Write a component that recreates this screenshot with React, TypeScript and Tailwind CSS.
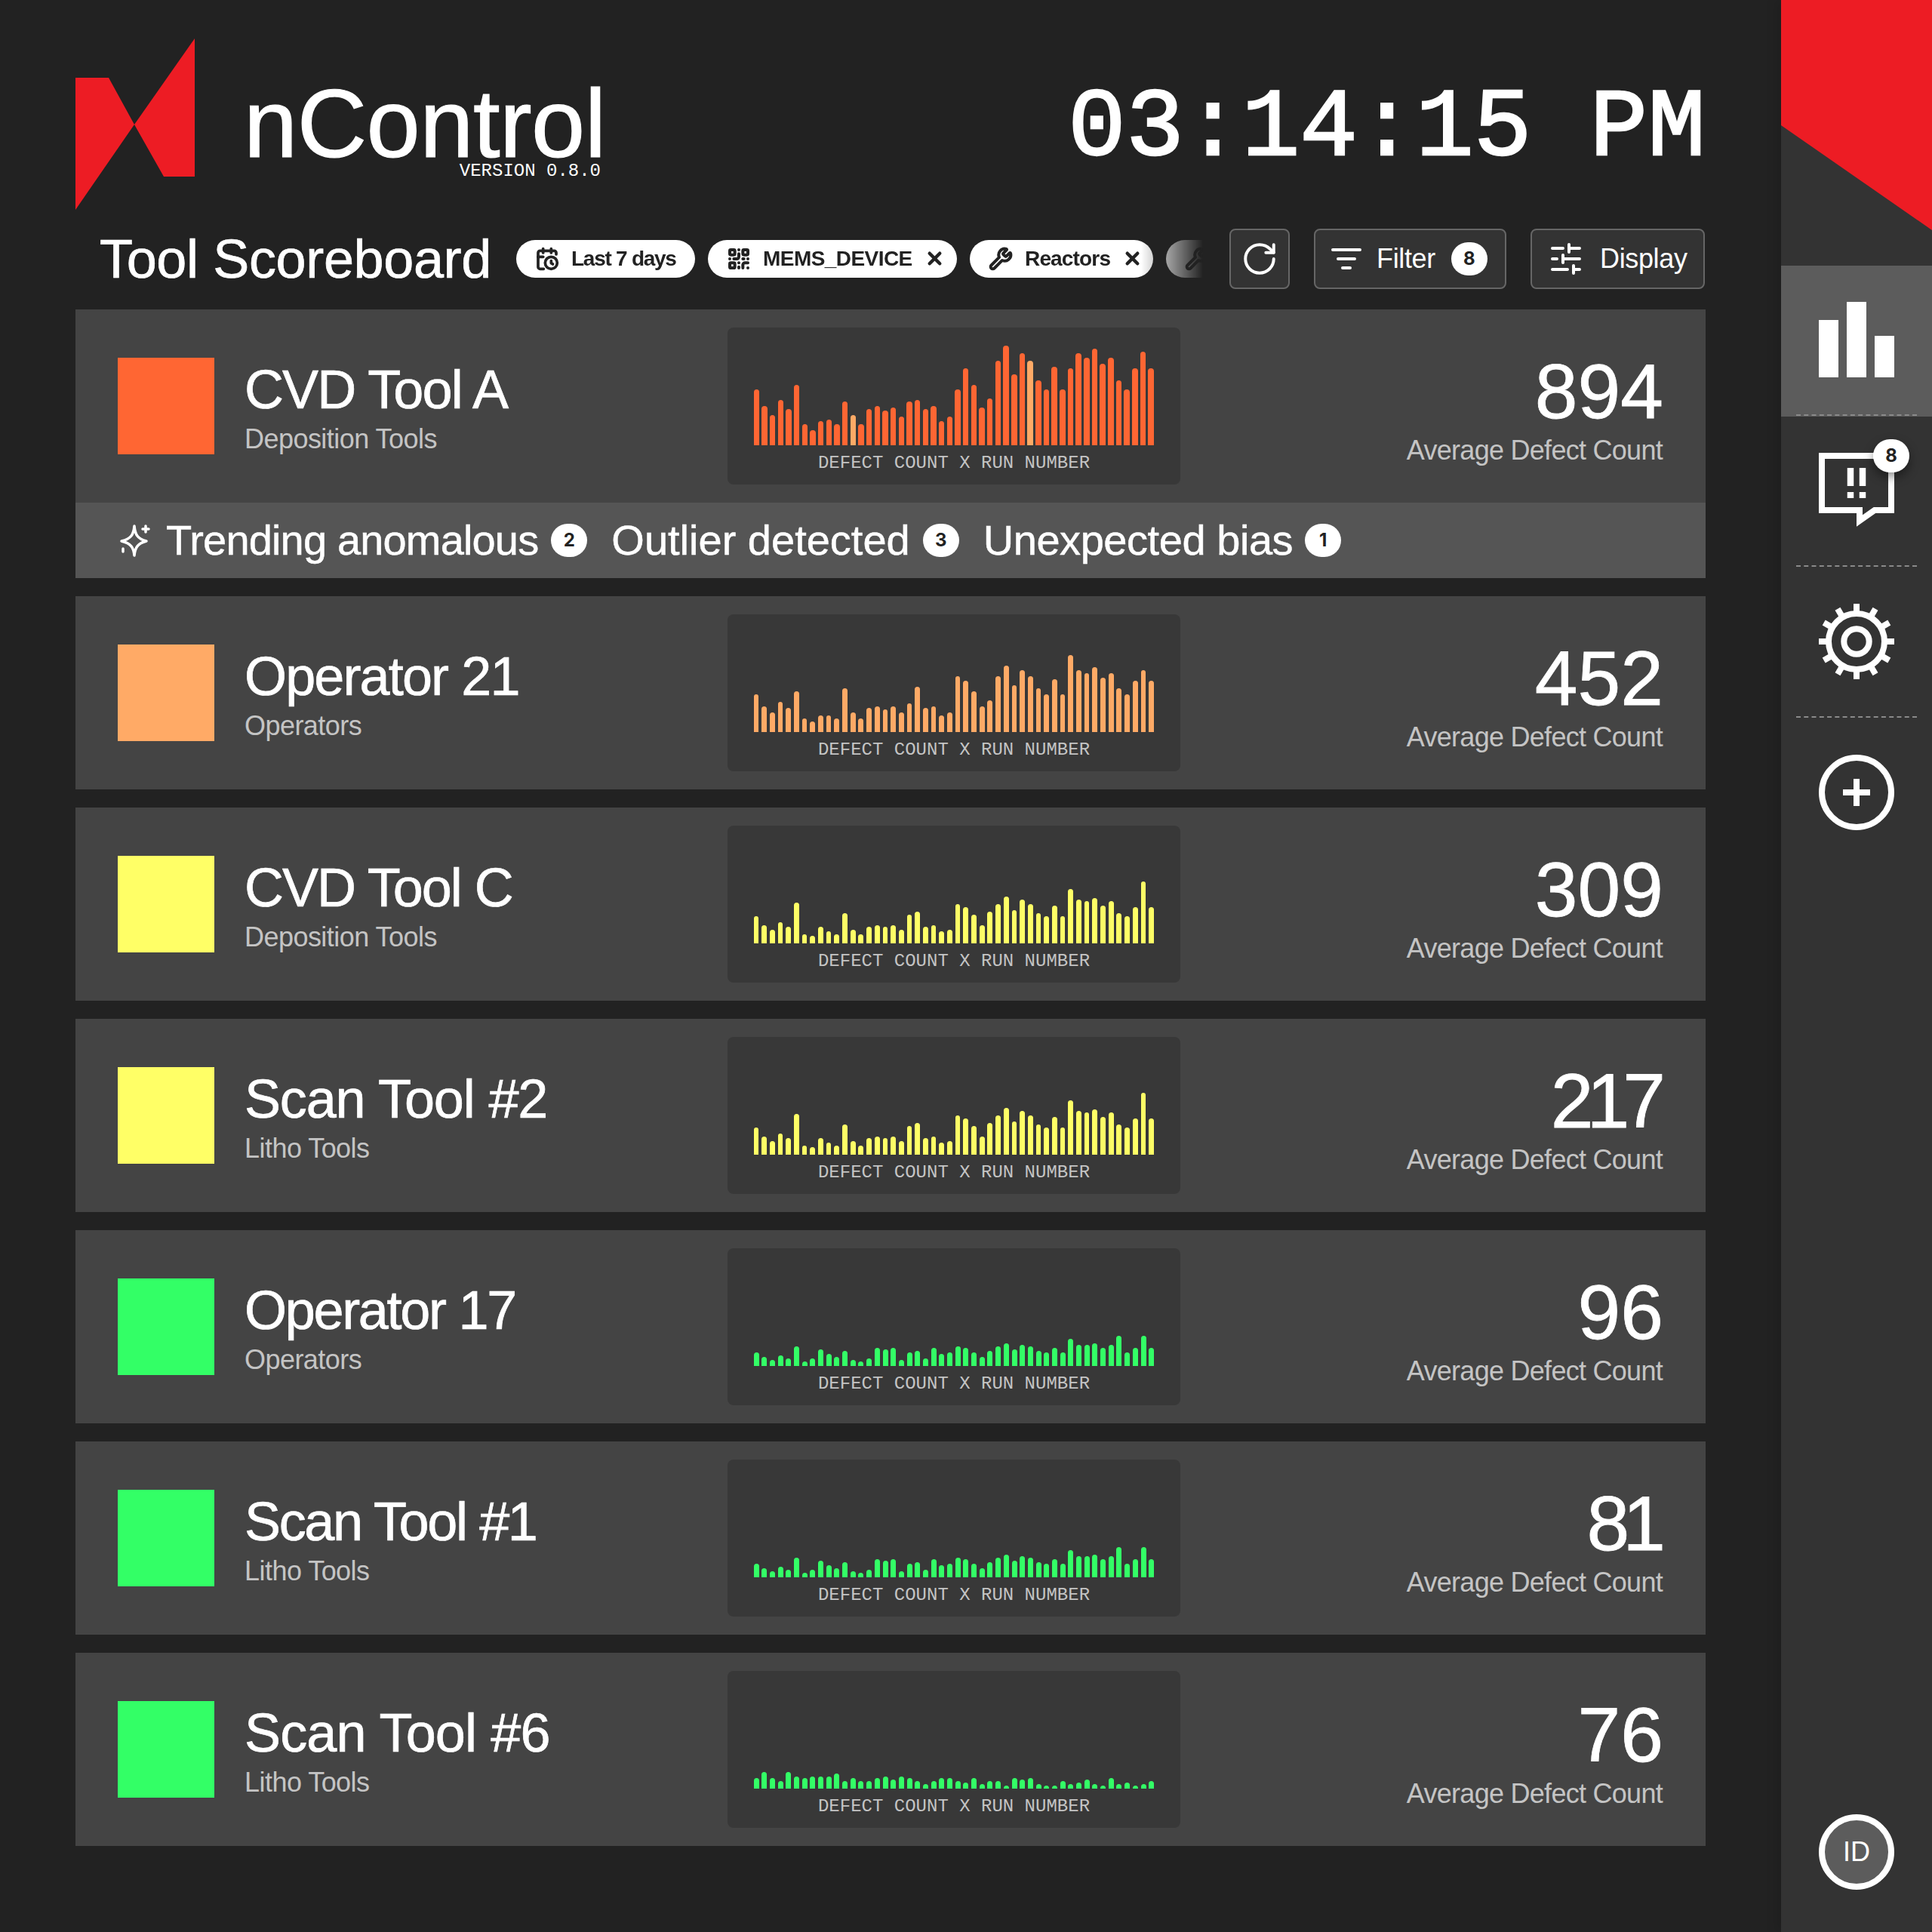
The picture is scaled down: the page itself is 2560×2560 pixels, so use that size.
import React from "react";
import { CalendarClock, QrCode, Wrench, X, RotateCw } from "lucide-react";

const A = [74,52,40,60,48,80,28,20,32,34,28,58,40,28,48,52,46,50,38,58,60,48,52,32,38,74,102,80,50,62,112,132,94,122,112,86,74,104,74,102,122,116,128,108,116,86,74,102,124,102];
const B = [50,34,26,40,32,54,18,14,22,22,18,58,26,18,32,34,30,34,26,38,60,32,34,22,26,74,68,54,34,42,74,88,62,82,74,58,50,70,50,102,82,78,86,72,78,58,50,68,82,68];
const C = [36,24,18,28,22,54,12,10,22,16,12,40,18,12,22,24,22,24,18,38,42,22,24,16,18,52,48,38,24,42,52,62,44,58,52,40,36,50,36,72,58,56,60,50,56,40,36,48,82,48];
const D = [18,12,8,14,10,26,6,10,22,16,12,20,8,6,10,24,22,24,8,18,20,10,24,16,18,26,24,18,12,20,26,30,22,28,26,20,18,24,18,36,28,28,30,24,28,40,18,24,40,24];
const E = [14,22,14,10,22,16,14,16,16,16,20,10,14,10,10,14,16,12,16,14,10,6,10,14,14,10,8,14,6,10,10,4,14,12,14,6,4,4,10,6,8,12,6,4,14,6,8,4,6,10];

const rows = [
  { name: "CVD Tool A", sub: "Deposition Tools", value: "894", color: "#ff6633", bars: A, barW: 7.5, track: "tracking-[-0.026em]", vc: "", hi: [12, 34] },
  { name: "Operator 21", sub: "Operators", value: "452", color: "#ffaa66", bars: B, barW: 6.8, track: "tracking-[-0.026em]", vc: "", hi: [] },
  { name: "CVD Tool C", sub: "Deposition Tools", value: "309", color: "#ffff66", bars: C, barW: 6.8, track: "tracking-[-0.028em]", vc: "", hi: [] },
  { name: "Scan Tool #2", sub: "Litho Tools", value: "217", color: "#ffff66", bars: C, barW: 6.8, track: "tracking-[-0.016em]", vc: "tracking-[-9px] mr-[6px]", hi: [] },
  { name: "Operator 17", sub: "Operators", value: "96", color: "#33ff66", bars: D, barW: 7, track: "tracking-[-0.032em]", vc: "", hi: [] },
  { name: "Scan Tool #1", sub: "Litho Tools", value: "81", color: "#33ff66", bars: D, barW: 7, track: "tracking-[-0.033em]", vc: "tracking-[-9px] mr-[6px]", hi: [] },
  { name: "Scan Tool #6", sub: "Litho Tools", value: "76", color: "#33ff66", bars: E, barW: 7, track: "tracking-[-0.012em]", vc: "", hi: [] },
];

function Chart({ bars, color, barW, hi }: { bars: number[]; color: string; barW: number; hi: number[] }) {
  return (
    <div className="w-[600px] h-[208px] shrink-0 rounded-lg bg-[#383838] flex flex-col items-center">
      <div className="mt-[24px] h-[132px] w-[531px] flex items-end justify-between">
        {bars.map((h, i) => (
          <div
            key={i}
            className="rounded-t-full"
            style={{ height: h, width: barW, backgroundColor: hi.includes(i) ? "#ffaa66" : color }}
          />
        ))}
      </div>
      <div className="mt-[10px] text-[24px] leading-[28px] text-[#c4c4c4] font-['Liberation_Mono',monospace]">
        DEFECT COUNT X RUN NUMBER
      </div>
    </div>
  );
}

function Row({ r }: { r: (typeof rows)[number] }) {
  return (
    <div className="h-[256px] flex items-center">
      <div className="w-[864px] shrink-0 pl-[56px] flex items-center gap-[40px]">
        <div className="w-[128px] h-[128px] shrink-0" style={{ backgroundColor: r.color }} />
        <div className="flex flex-col pt-[4px]">
          <div className={`text-[72px] leading-[80px] text-white [-webkit-text-stroke-width:0.7px] ${r.track}`}>{r.name}</div>
          <div className="mt-[4px] text-[36px] leading-[44px] text-[#c4c4c4] tracking-[-0.015em]">{r.sub}</div>
        </div>
      </div>
      <Chart bars={r.bars} color={r.color} barW={r.barW} hi={r.hi} />
      <div className="flex-1 pr-[56px] pt-[10px] flex flex-col items-end">
        <div className={`text-[102px] leading-[104px] text-white [-webkit-text-stroke-width:0.8px] ${r.vc}`}>{r.value}</div>
        <div className="mt-[4px] text-[36px] leading-[44px] text-[#c4c4c4] tracking-[-0.02em] mr-[1px]">Average Defect Count</div>
      </div>
    </div>
  );
}

function Badge({ n }: { n: string }) {
  return (
    <span className="w-[48px] h-[44px] shrink-0 rounded-full bg-white text-[#222222] flex items-center justify-center text-[24px] tracking-normal font-bold font-['Inter',sans-serif] [-webkit-text-stroke-width:0px]">
      {n}
    </span>
  );
}

function Pill({ icon, label, close, w, track }: { icon: React.ReactNode; label?: string; close?: boolean; w: string; track?: string }) {
  return (
    <div className={`h-[50px] shrink-0 rounded-full bg-white text-[#222222] flex items-center pl-[25px] gap-[16px] ${w}`}>
      {icon}
      {label && <span className={`text-[28px] font-bold whitespace-nowrap ${track}`}>{label}</span>}
      {close && <X size={27} strokeWidth={4} className="shrink-0 -mt-[1px]" />}
    </div>
  );
}

function Gear() {
  const angles = [0, 30, 60, 90, 120, 150, 180, 210, 240, 270, 300, 330];
  return (
    <svg width="100" height="100" viewBox="0 0 100 100" fill="none" stroke="white" strokeWidth="8">
      <circle cx="50" cy="50" r="37" />
      <circle cx="50" cy="50" r="16.7" />
      {angles.map((a) => (
        <line key={a} x1="50" y1="0" x2="50" y2="14" transform={`rotate(${a} 50 50)`} />
      ))}
    </svg>
  );
}

function SideItem({ children, active, line }: { children: React.ReactNode; active?: boolean; line?: boolean }) {
  return (
    <div className={`h-[200px] pb-[4px] relative flex items-center justify-center ${active ? "bg-[#5c5c5c]" : ""}`}>
      {children}
      {line && <div className="absolute left-[20px] right-[20px] bottom-[1px] border-t-2 border-dashed border-[#8a8a8a]" />}
    </div>
  );
}

export default function App() {
  return (
    <div className="w-[2560px] h-[2560px] flex bg-[#222222] font-['Liberation_Sans',sans-serif] overflow-hidden">
      <main className="w-[2360px] shrink-0 px-[100px] pt-[51px]">
        <div className="h-[227px] flex justify-between">
          <div className="flex">
            <svg width="158" height="227" viewBox="0 0 158 227" className="shrink-0">
              <polygon points="0,52 44,52 78,114 158,0 158,183 117,183 78,114 0,227" fill="#ed1c24" />
            </svg>
            <div className="ml-[65px] w-[477px] mt-[63px] flex flex-col">
              <div className="text-[128px] leading-[100px] text-white tracking-[-0.004em] whitespace-nowrap [-webkit-text-stroke-width:1.2px]">nControl</div>
              <div className="self-end pr-[4px] text-[24px] leading-[26px] text-white font-['Liberation_Mono',monospace] whitespace-nowrap">
                VERSION 0.8.0
              </div>
            </div>
          </div>
          <div className="mt-[45px] text-[128px] leading-[150px] h-[150px] text-white font-['Liberation_Mono',monospace] whitespace-nowrap [-webkit-text-stroke-width:2.5px]">
            03:14:15 PM
          </div>
        </div>

        <div className="mt-[25px] h-[80px] flex items-center">
          <div className="w-[584px] shrink-0 pl-[32px] text-[72px] leading-[80px] text-white tracking-[-0.005em] whitespace-nowrap [-webkit-text-stroke-width:0.7px]">
            Tool Scoreboard
          </div>
          <div className="w-[910px] shrink-0 flex items-center gap-[17px] overflow-hidden [mask-image:linear-gradient(to_right,black_91%,transparent_100%)]">
            <Pill w="w-[237px]" track="tracking-[-0.045em]" label="Last 7 days" icon={<CalendarClock size={32} strokeWidth={2.8} className="shrink-0" />} />
            <Pill w="w-[330px]" track="tracking-[-0.02em]" label="MEMS_DEVICE" close icon={<QrCode size={32} strokeWidth={3} className="shrink-0" />} />
            <Pill w="w-[243px]" track="tracking-[-0.03em]" label="Reactors" close icon={<Wrench size={32} strokeWidth={3} className="shrink-0" />} />
            <Pill w="w-[243px]" icon={<Wrench size={32} strokeWidth={3} className="shrink-0" />} />
          </div>
          <div className="ml-[35px] flex items-center gap-[32px]">
            <div className="w-[80px] h-[80px] rounded-lg border-2 border-[#666666] bg-[#333333] flex items-center justify-center">
              <RotateCw size={50} strokeWidth={1.9} color="white" />
            </div>
            <div className="w-[255px] h-[80px] rounded-lg border-2 border-[#666666] bg-[#333333] flex items-center pl-[21px] text-white">
              <svg width="40" height="28" viewBox="0 0 40 28" fill="none" stroke="white" strokeWidth="4" strokeLinecap="round" className="shrink-0">
                <path d="M2 2H38M9 14H31M15 26H25" />
              </svg>
              <span className="ml-[20px] text-[36px] tracking-[-0.01em]">Filter</span>
              <span className="ml-[21px]"><Badge n="8" /></span>
            </div>
            <div className="w-[231px] h-[80px] rounded-lg border-2 border-[#666666] bg-[#333333] flex items-center pl-[25px] text-white">
              <svg width="40" height="42" viewBox="0 0 40 42" fill="none" stroke="white" strokeWidth="4" strokeLinecap="round" className="shrink-0">
                <path d="M2 7H16M24 7H38M24 2V12M2 21H8M16 21H38M16 16V26M2 35H22M30 35H38M30 30V40" />
              </svg>
              <span className="ml-[25px] text-[36px] tracking-[-0.01em]">Display</span>
            </div>
          </div>
        </div>

        <div className="mt-[27px] flex flex-col gap-[24px]">
          <div className="bg-[#444444]">
            <Row r={rows[0]} />
            <div className="h-[100px] bg-[#555555] flex items-center pl-[58px] text-white text-[56px] whitespace-nowrap [-webkit-text-stroke-width:0.5px]">
              <svg width="44" height="44" viewBox="0 0 44 44" fill="none" stroke="white" strokeWidth="3.5" strokeLinejoin="round" strokeLinecap="round" className="shrink-0">
                <path d="M20 3C21 14 24 20 36 23C24 26 21 32 20 42C19 32 16 26 3 23C16 20 19 14 20 3Z" />
                <path d="M35 3V11M31 7H39" />
                <path d="M5 33V37" />
              </svg>
              <span className="ml-[18px] tracking-[-0.015em]">Trending anomalous</span>
              <span className="ml-[17px]"><Badge n="2" /></span>
              <span className="ml-[32px] tracking-normal">Outlier detected</span>
              <span className="ml-[17px]"><Badge n="3" /></span>
              <span className="ml-[32px] tracking-[-0.008em]">Unexpected bias</span>
              <span className="ml-[16px]"><Badge n="1" /></span>
            </div>
          </div>
          {rows.slice(1).map((r) => (
            <div key={r.name} className="bg-[#444444]">
              <Row r={r} />
            </div>
          ))}
        </div>
      </main>

      <aside className="w-[200px] shrink-0 bg-[#333333] flex flex-col shadow-[-6px_0_14px_rgba(0,0,0,0.12)]">
        <div className="h-[352px] shrink-0 bg-[#ed1c24] [clip-path:polygon(0_0,100%_0,100%_305px,0_166px)]" />
        <SideItem active line>
          <svg width="100" height="100" viewBox="0 0 100 100" fill="white">
            <rect x="0" y="24" width="26" height="76" />
            <rect x="37" y="0" width="26" height="100" />
            <rect x="74" y="45" width="26" height="55" />
          </svg>
        </SideItem>
        <SideItem line>
          <div className="relative w-[100px] h-[100px]">
            <svg width="100" height="100" viewBox="0 0 100 100" fill="none" stroke="white" strokeWidth="8">
              <path d="M4 4H96V76H74L54 90V76H4Z" />
              <path d="M42 20V44M58 20V44M42 52V60M58 52V60" strokeWidth="8.5" />
            </svg>
            <div className="absolute left-[72px] -top-[18px] shadow-[0_6px_14px_rgba(0,0,0,0.45)] rounded-full">
              <Badge n="8" />
            </div>
          </div>
        </SideItem>
        <SideItem line>
          <Gear />
        </SideItem>
        <SideItem>
          <svg width="100" height="100" viewBox="0 0 100 100" fill="none" stroke="white" strokeWidth="8">
            <circle cx="50" cy="50" r="46" />
            <path d="M32 50H68M50 32V68" />
          </svg>
        </SideItem>
        <div className="mt-auto mb-[56px] mx-auto w-[100px] h-[100px] rounded-full border-[8px] border-white bg-[#5c5c5c] flex items-center justify-center text-[36px] text-white">
          ID
        </div>
      </aside>
    </div>
  );
}
